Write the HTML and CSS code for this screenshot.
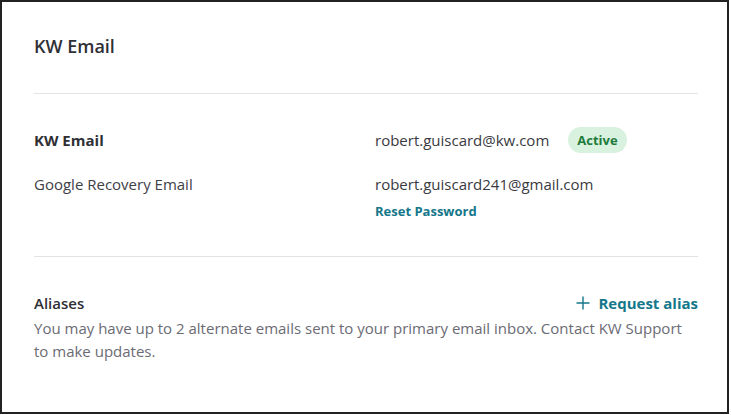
FILE: index.html
```html
<!DOCTYPE html>
<html lang="en">
<head>
    <meta charset="UTF-8" />
    <title>KW Email</title>
    <link rel="stylesheet" href="styles.css">
</head>
<body>

<div class="email-card">
    <h2 class="card-title">KW Email</h2>

    <div class="section">
        <div class="info-row first">
            <div class="info-label strong">KW Email</div>
            <div class="info-value">
                <span>robert.guiscard@kw.com</span>
                <span class="badge">Active</span>
            </div>
        </div>
        <div class="info-row">
            <div class="info-label">Google Recovery Email</div>
            <div class="info-value stacked">
                <span>robert.guiscard241@gmail.com</span>
                <a href="#" class="link-small">Reset Password</a>
            </div>
        </div>
    </div>

    <div class="section aliases">
        <div class="aliases-head">
            <div class="aliases-title">Aliases</div>
            <a href="#" class="request-link">
                <svg width="14" height="14" viewBox="0 0 14 14"><path d="M7 0.5v13M0.5 7h13" stroke="currentColor" stroke-width="1.4" fill="none"/></svg>
                Request alias
            </a>
        </div>
        <p class="aliases-text">You may have up to 2 alternate emails sent to your primary email inbox. Contact KW Support to make updates.</p>
    </div>
</div>

</body>
</html>
```

FILE: styles.css
```css
body {
    margin: 0;
    font-family: 'Open Sans', 'Lato', sans-serif;
    color: #33333a;
    background: #fff;
}
.email-card {
    width: 729px;
    height: 414px;
    box-sizing: border-box;
    border: 2px solid #222;
    padding: 0 29px 0 32px;
}
.card-title {
    margin: 0;
    padding: 33px 0 36px;
    font-size: 18px;
    font-weight: 600;
    line-height: 22px;
    color: #2f2f36;
    border-bottom: 1px solid #e3e3e6;
}
.section {
    padding: 33px 0 37px;
    border-bottom: 1px solid #e3e3e6;
}
.info-row {
    display: flex;
    font-size: 15px;
    line-height: 22px;
}
.info-row.first {
    align-items: center;
}
.info-row + .info-row {
    margin-top: 20px;
}
.info-label {
    width: 341px;
    color: #404048;
}
.info-label.strong {
    font-weight: 700;
    color: #2f2f36;
}
.info-value {
    display: flex;
    align-items: center;
    gap: 19px;
    color: #3a3a42;
}
.info-value.stacked {
    flex-direction: column;
    align-items: flex-start;
    gap: 8px;
}
.badge {
    background: #d9f2df;
    color: #1e7b3b;
    font-weight: 700;
    font-size: 13px;
    line-height: 26px;
    padding: 0 9px;
    border-radius: 13px;
}
.link-small {
    color: #14778a;
    font-size: 13px;
    font-weight: 700;
    text-decoration: none;
    line-height: 16px;
}
.aliases {
    border-bottom: none;
    padding-top: 35px;
}
.aliases-head {
    display: flex;
    justify-content: space-between;
    align-items: center;
    line-height: 22px;
}
.aliases-title {
    font-size: 15px;
    font-weight: 600;
    color: #2f2f36;
}
.request-link {
    display: flex;
    align-items: center;
    gap: 8px;
    color: #14778a;
    font-size: 15px;
    font-weight: 700;
    text-decoration: none;
}
.aliases-text {
    margin: 3px 0 0;
    font-size: 15px;
    line-height: 23px;
    color: #6b6b74;
}
```
